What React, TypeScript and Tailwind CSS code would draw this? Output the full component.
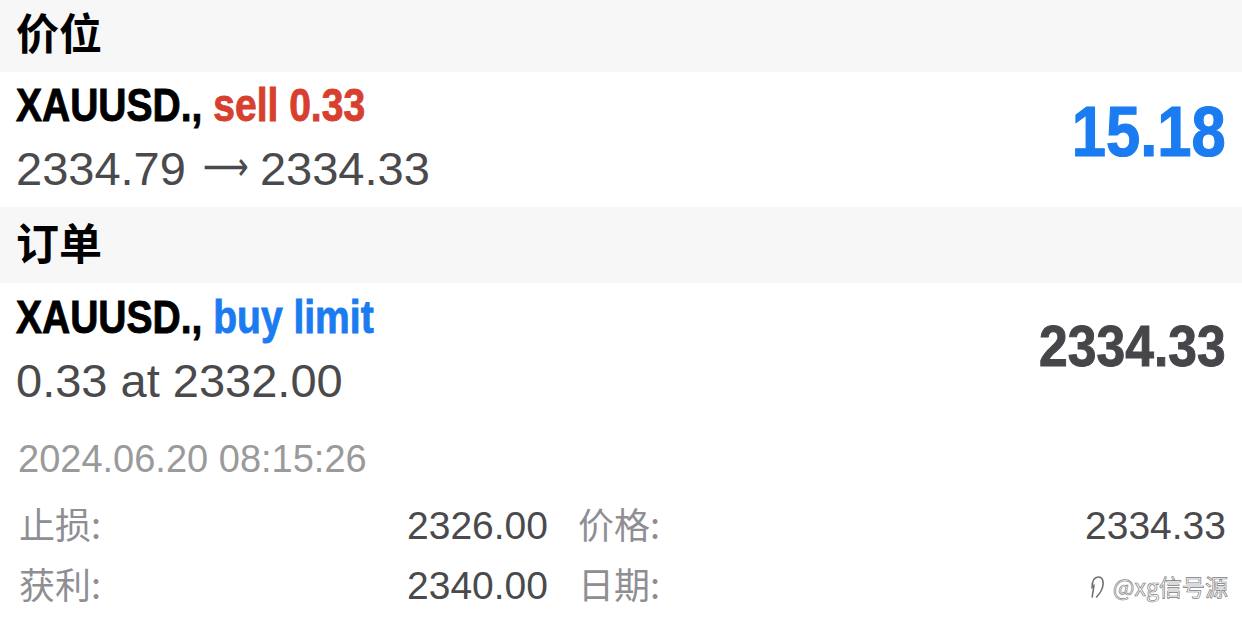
import React from "react";

const SANS = "font-['Liberation_Sans',Arial,sans-serif]";

function Watermark() {
  return (
    <div className="absolute right-[14px] top-[570px] flex items-center gap-[8px] h-[32px]">
      <svg width="16" height="28" viewBox="0 0 16 28" fill="none" stroke="#6f6f6f" strokeWidth="1.6" strokeLinecap="round">
        <path d="M3 16 C3 9 5.5 5 9.5 5 C13.5 5 14.5 9 14 13 C13.5 17 11.5 21 7.5 25" />
        <path d="M5 13 L3.2 25" />
      </svg>
      <span className="font-['Noto_Sans_CJK_SC',sans-serif] text-[23px] leading-[32px] text-white [-webkit-text-stroke:0.7px_#808080]">
        @xg信号源
      </span>
    </div>
  );
}

export default function App() {
  return (
    <div className={`relative w-[1242px] h-[626px] overflow-hidden bg-white ${SANS}`}>
      {/* Header 价位 */}
      <div className="h-[72px] bg-[#f7f7f7] px-4">
        <div className="font-['Noto_Sans_CJK_SC',sans-serif] font-bold text-[43px] leading-[62px] text-black">价位</div>
      </div>

      {/* Position row */}
      <div className="h-[135px] flex items-center justify-between px-4 bg-white">
        <div className="self-start pt-[5px]">
          <div className="h-[56px] leading-[56px] whitespace-nowrap">
            <span className="inline-block origin-left scale-x-[0.83] font-bold text-[47px] text-black [-webkit-text-stroke:0.9px_currentColor]">
              XAUUSD., <span className="text-[#d7402f]">sell 0.33</span>
            </span>
          </div>
          <div className="flex items-center h-[72px] text-[47px] text-[#4a4a4c] whitespace-nowrap">
            <span className="leading-[72px]">2334.79</span>
            <span className="mx-[12px] w-[50px] text-center font-['DejaVu_Sans',sans-serif] text-[40px] leading-[72px] inline-block origin-center scale-x-[0.8] translate-y-[-3px]">⟶</span>
            <span className="leading-[72px]">2334.33</span>
          </div>
        </div>
        <div className="mt-[3px] leading-[71px]">
          <span className="inline-block origin-right scale-x-[0.866] font-bold text-[71px] text-[#1a7cf0] [-webkit-text-stroke:1.2px_currentColor]">15.18</span>
        </div>
      </div>

      {/* Header 订单 */}
      <div className="h-[76px] bg-[#f7f7f7] px-4 pt-[3px]">
        <div className="font-['Noto_Sans_CJK_SC',sans-serif] font-bold text-[43px] leading-[62px] text-black">订单</div>
      </div>

      {/* Order row */}
      <div className="flex items-center justify-between px-4 pt-[6px]">
        <div>
          <div className="h-[56px] leading-[56px] whitespace-nowrap">
            <span className="inline-block origin-left scale-x-[0.83] font-bold text-[47px] text-black [-webkit-text-stroke:0.9px_currentColor]">
              XAUUSD., <span className="text-[#1a7cf0]">buy limit</span>
            </span>
          </div>
          <div className="leading-[72px] text-[47px] text-[#4a4a4c] whitespace-nowrap">0.33 at 2332.00</div>
        </div>
        <div className="leading-[60px]">
          <span className="inline-block origin-right scale-x-[0.89] font-bold text-[58px] text-[#46464a] [-webkit-text-stroke:1px_currentColor]">2334.33</span>
        </div>
      </div>

      {/* Date */}
      <div className="px-4 pt-[18px]">
        <div className="pl-[2px] text-[38px] leading-[48px] text-[#9a9a9a]">2024.06.20 08:15:26</div>
      </div>

      {/* Details */}
      <div className="mt-[13px] grid grid-cols-[532px_1fr] gap-x-[30px] px-4">
        <div className="flex justify-between items-start h-[60px]">
          <span className="pl-[3px] font-['Noto_Sans_CJK_SC',sans-serif] text-[36px] leading-[54px] text-[#8e8e93]">止损:</span>
          <span className="text-[39px] leading-[60px] text-[#4a4a4c]">2326.00</span>
        </div>
        <div className="flex justify-between items-start h-[60px]">
          <span className="font-['Noto_Sans_CJK_SC',sans-serif] text-[36px] leading-[54px] text-[#8e8e93]">价格:</span>
          <span className="text-[39px] leading-[60px] text-[#4a4a4c]">2334.33</span>
        </div>
        <div className="flex justify-between items-start h-[60px]">
          <span className="pl-[3px] font-['Noto_Sans_CJK_SC',sans-serif] text-[36px] leading-[54px] text-[#8e8e93]">获利:</span>
          <span className="text-[39px] leading-[60px] text-[#4a4a4c]">2340.00</span>
        </div>
        <div className="flex justify-between items-start h-[60px]">
          <span className="font-['Noto_Sans_CJK_SC',sans-serif] text-[36px] leading-[54px] text-[#8e8e93]">日期:</span>
          <span />
        </div>
      </div>

      <Watermark />
    </div>
  );
}
